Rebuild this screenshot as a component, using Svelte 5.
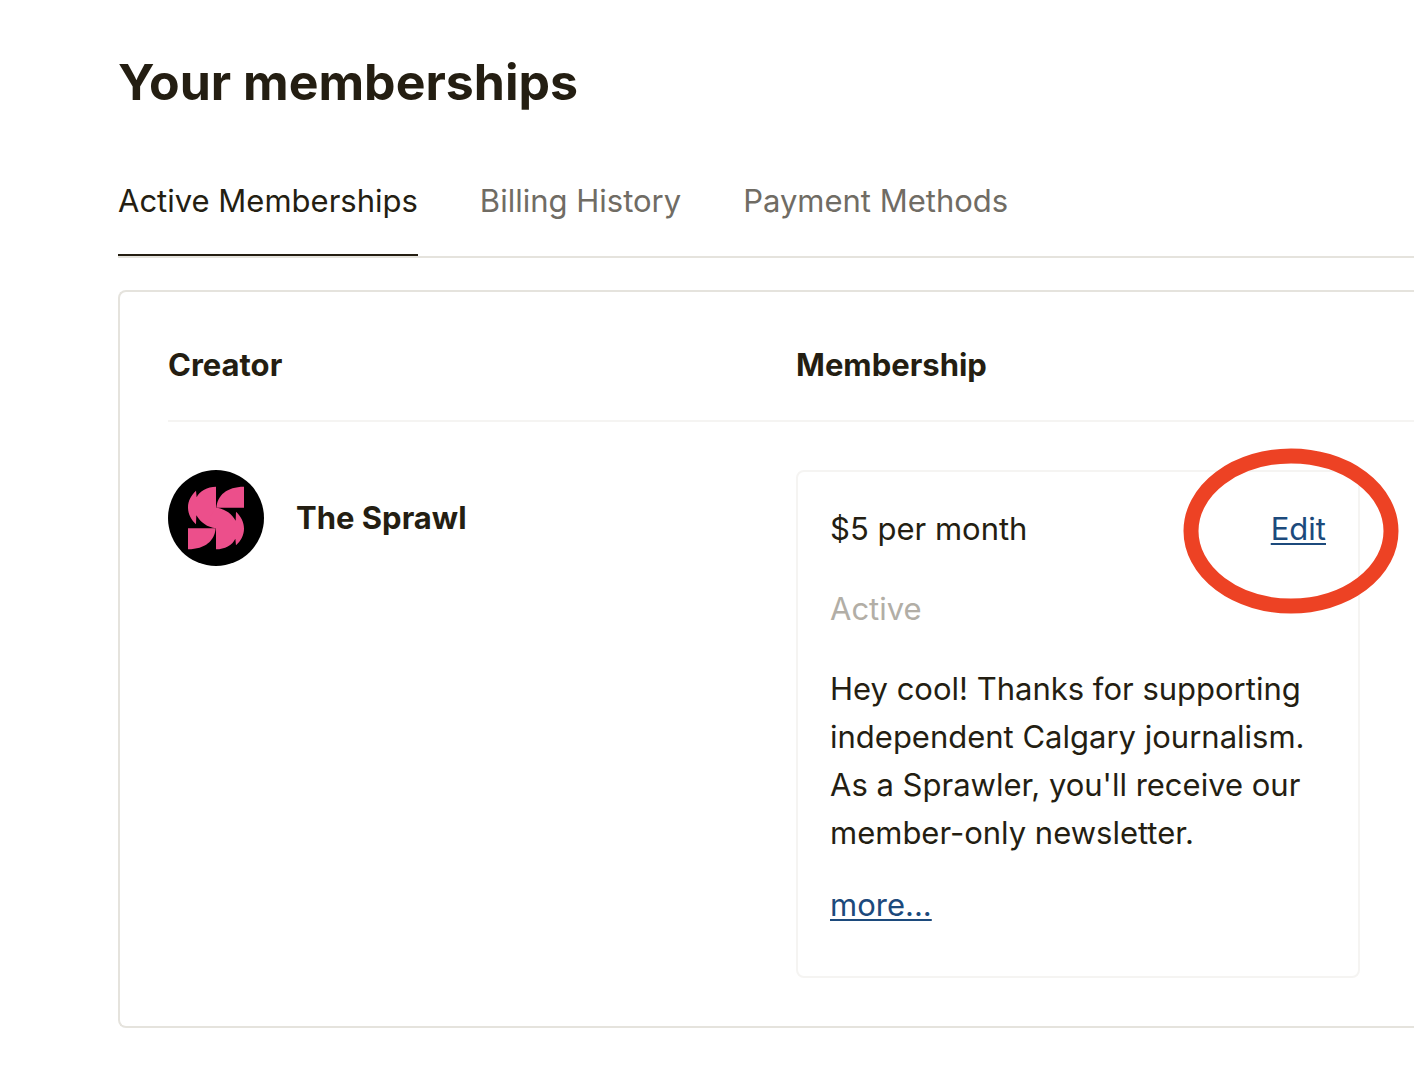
<script>
  const tabs = ['Active Memberships', 'Billing History', 'Payment Methods'];
  let activeTab = $state(tabs[0]);

  const memberships = [
    {
      creator: 'The Sprawl',
      price: '$5 per month',
      status: 'Active',
      description:
        "Hey cool! Thanks for supporting independent Calgary journalism. As a Sprawler, you'll receive our member-only newsletter."
    }
  ];
</script>

{#snippet logoHalf()}
  <path d="M144 50C118 51 95 62 86 82L84 62C69 76 60 93 60 112C60 132 69 149 84 163L85 136C98 158 118 172 144 175L164 144L144 112Z" />
  <path d="M228 50L228 113L145 113C148 76 176 50 228 50Z" />
{/snippet}

<main class="page">
  <h1>Your memberships</h1>

  <div class="tabs" role="tablist">
    {#each tabs as tab}
      <button
        class="tab"
        class:active={tab === activeTab}
        role="tab"
        aria-selected={tab === activeTab}
        onclick={() => (activeTab = tab)}>{tab}</button>
    {/each}
  </div>

  <section class="panel">
    <table>
      <thead>
        <tr>
          <th scope="col">Creator</th>
          <th scope="col" class="membership-col">Membership</th>
        </tr>
      </thead>
      <tbody>
        {#each memberships as item}
          <tr>
            <td>
              <div class="creator">
                <svg class="avatar" viewBox="0 0 288 288" aria-hidden="true">
                  <circle cx="144" cy="144" r="144" fill="#000" />
                  <g fill="#ec4f8b">
                    {@render logoHalf()}
                    <g transform="rotate(180 144 144)">
                      {@render logoHalf()}
                    </g>
                  </g>
                </svg>
                <strong>{item.creator}</strong>
              </div>
            </td>
            <td>
              <div class="membership">
                <div class="membership-top">
                  <span>{item.price}</span>
                  <a href="#edit">Edit</a>
                </div>
                <div class="status">{item.status}</div>
                <p>{item.description}</p>
                <a href="#more">more...</a>
                <svg class="marker" viewBox="0 0 216 166" aria-hidden="true">
                  <ellipse cx="108" cy="83" rx="100" ry="75" fill="none" stroke="#ed4224" stroke-width="15" />
                </svg>
              </div>
            </td>
          </tr>
        {/each}
      </tbody>
    </table>
  </section>
</main>

<style>
  :global(body) {
    margin: 0;
    background: #fff;
  }

  .page {
    padding: 52px 0 48px 118px;
    font-family: Inter, 'Liberation Sans', sans-serif;
    font-size: 31px;
    line-height: 48px;
    color: #241e12;
    overflow: hidden;
  }

  h1 {
    margin: 0 0 65px;
    font-size: 50px;
    line-height: 60px;
    font-weight: 700;
  }

  .tabs {
    display: flex;
    gap: 62px;
    border-bottom: 2px solid #e5e3dd;
  }

  .tab {
    padding: 0 0 29px;
    border: 0;
    border-bottom: 2px solid transparent;
    background: none;
    font: inherit;
    color: #706c64;
    white-space: nowrap;
    cursor: pointer;
  }

  .tab.active {
    color: #241e12;
    border-bottom-color: #241e12;
  }

  .panel {
    margin-top: 32px;
    padding: 49px 0 48px 48px;
    border: 2px solid #e5e3dd;
    border-right: 0;
    border-radius: 8px 0 0 8px;
  }

  table {
    width: 100%;
    border-collapse: separate;
    border-spacing: 0;
    table-layout: fixed;
  }

  th {
    padding: 0 0 31px;
    border-bottom: 2px solid #f5f4f2;
    text-align: left;
    font-weight: 700;
  }

  .membership-col {
    width: 618px;
  }

  td {
    padding: 48px 0 0;
    vertical-align: top;
  }

  td:last-child {
    padding-right: 54px;
  }

  .creator {
    display: flex;
    align-items: center;
    gap: 32px;
  }

  .avatar {
    width: 96px;
    height: 96px;
  }

  .membership {
    position: relative;
    padding: 33px 32px 47px;
    border: 2px solid #f5f4f2;
    border-radius: 8px;
  }

  .membership-top {
    display: flex;
    justify-content: space-between;
  }

  .status {
    margin-top: 32px;
    color: #b2aea6;
  }

  p {
    margin: 32px 0 24px;
  }

  a {
    color: #1c4a7c;
    text-decoration: underline;
    text-decoration-thickness: 2px;
    text-underline-offset: 3px;
  }

  /* red circle drawn around the edit link */
  .marker {
    position: absolute;
    top: -24px;
    right: -41px;
    width: 216px;
    height: 166px;
    pointer-events: none;
  }
</style>
